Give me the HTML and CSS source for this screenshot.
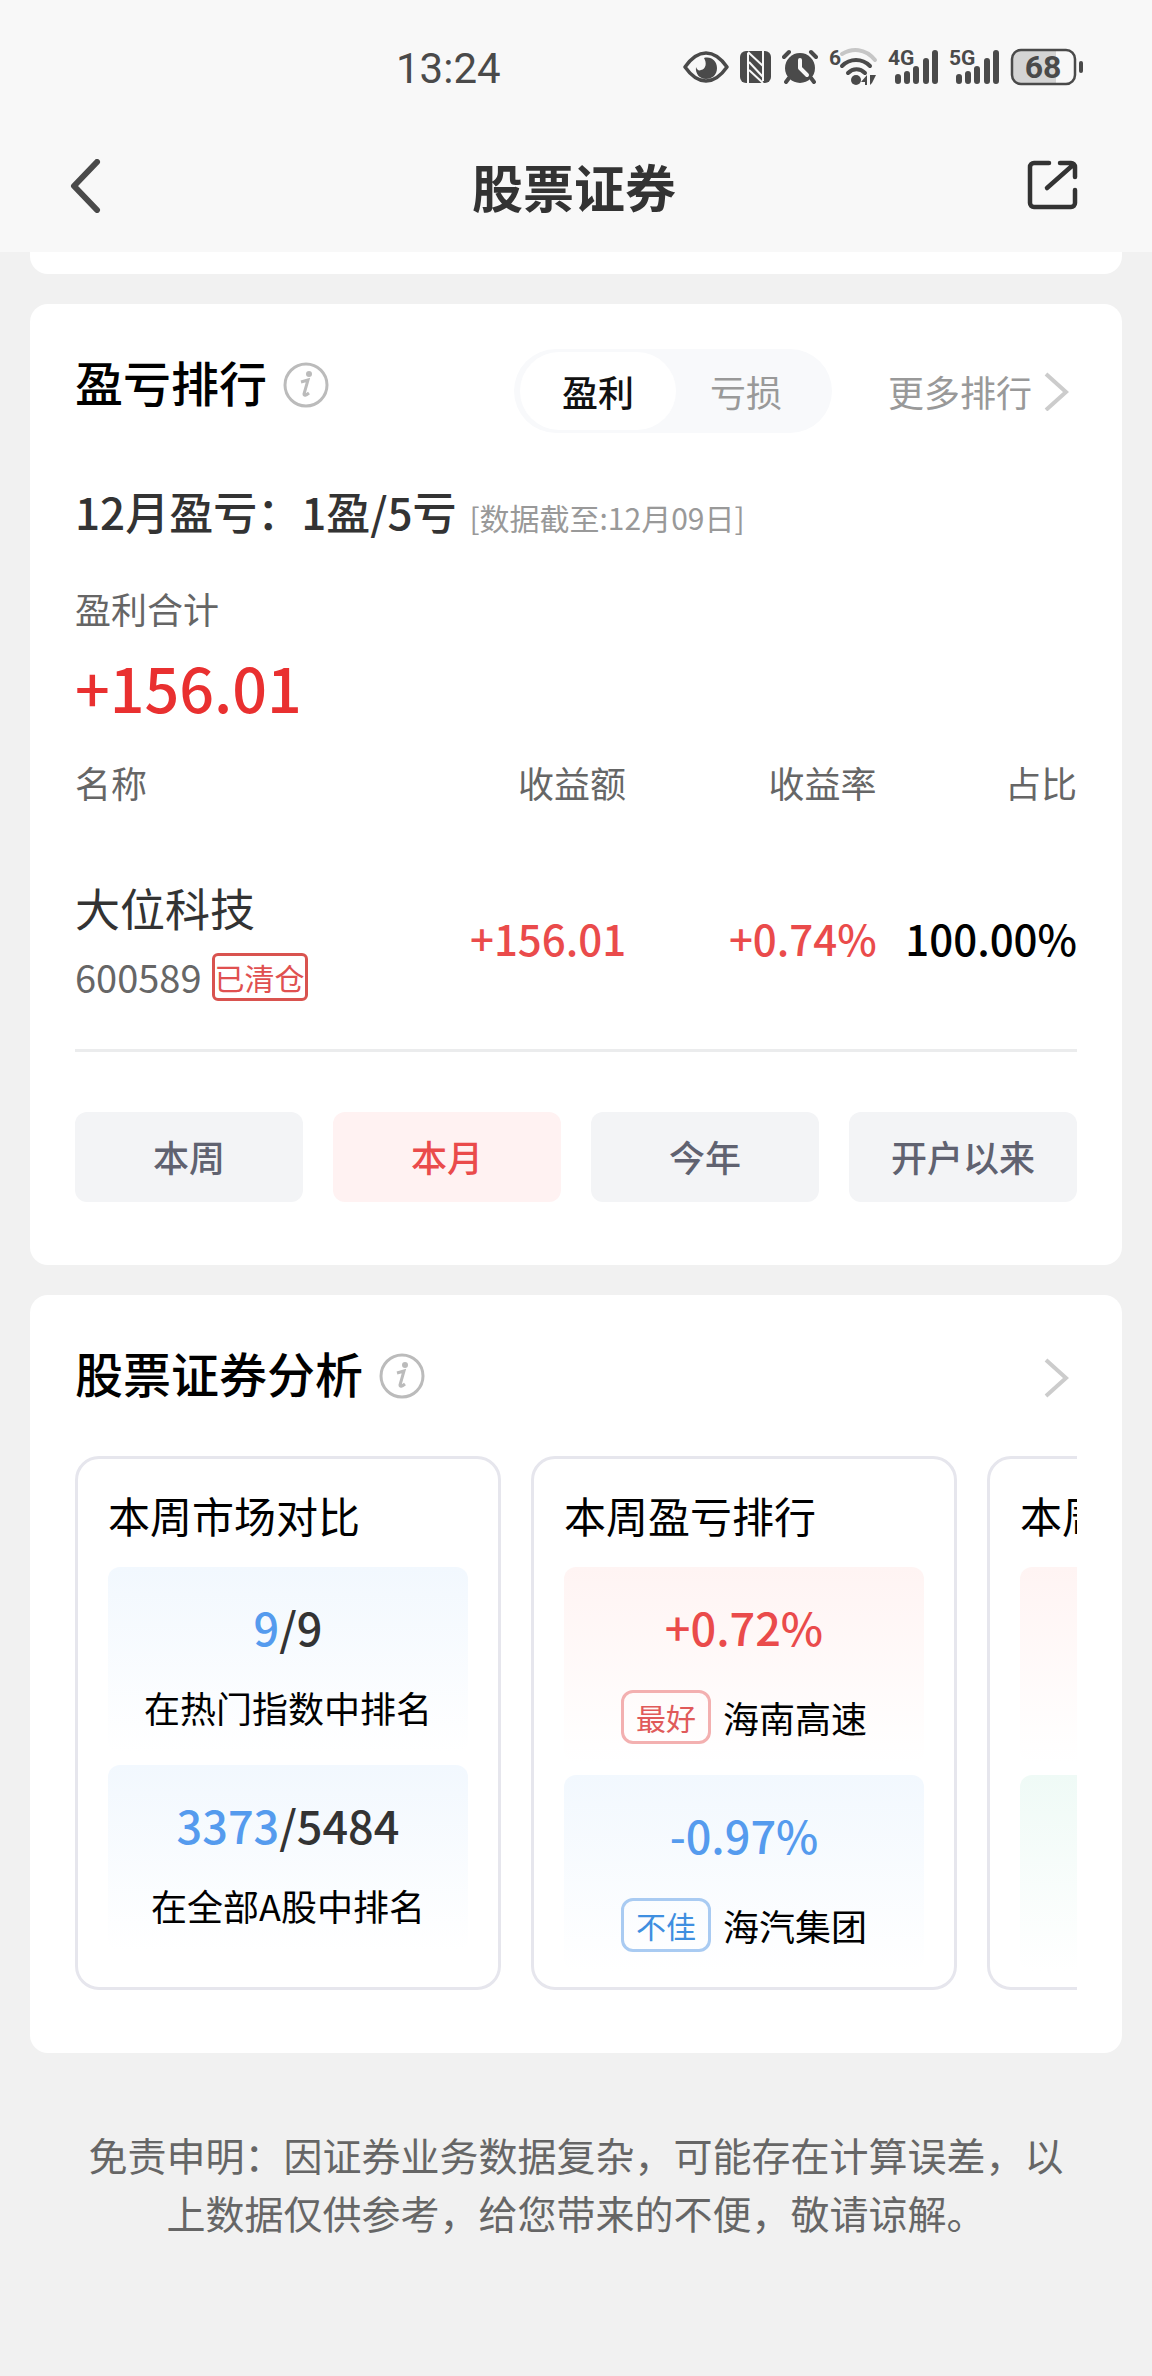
FILE: index.html
```html
<!DOCTYPE html>
<html lang="zh-CN">
<head>
<meta charset="utf-8">
<meta name="viewport" content="width=device-width, initial-scale=1">
<title>股票证券</title>
<link rel="stylesheet" href="styles.css">
</head>
<body>
<header class="top">
  <div class="status">
    <span class="status-time">13:24</span>
    <div class="status-icons">
      <svg width="46" height="36" viewBox="0 0 46 36" aria-hidden="true">
        <path d="M2 18C9 8 16 4 23 4s14 4 21 14C37 28 30 32 23 32S9 28 2 18Z" fill="none" stroke="#4a4a4a" stroke-width="3.5" stroke-linejoin="round"/>
        <path d="M21 9c7-2 13 3 13 10s-5 11-11 11-11-5-10-12c1 3 3 4 5 3 5-1 6-7 3-12Z" fill="#4a4a4a"/>
      </svg>
      <svg width="31" height="36" viewBox="0 0 31 36" aria-hidden="true">
        <rect x="0" y="2" width="31" height="32" rx="6" fill="#4a4a4a"/>
        <path d="M8 34V4M8 3l15 14M23 32V2M9 13l14 15M9 21l14 13" fill="none" stroke="#f8f8f8" stroke-width="2"/>
      </svg>
      <svg width="36" height="36" viewBox="0 0 36 36" aria-hidden="true">
        <circle cx="18" cy="19" r="15" fill="#4a4a4a"/>
        <path d="M2 8l5-5M34 8l-5-5M7 29l-3 4M29 29l3 4" stroke="#4a4a4a" stroke-width="4" stroke-linecap="round"/>
        <path d="M18 11v8l7 7" fill="none" stroke="#f8f8f8" stroke-width="4" stroke-linecap="round" stroke-linejoin="round"/>
      </svg>
      <svg class="net" width="48" height="38" viewBox="0 0 48 38" aria-hidden="true">
        <text x="0" y="17" class="net-label">6</text>
        <g fill="none" stroke="#4a4a4a" stroke-width="4" stroke-linecap="round">
          <path d="M13 6c10-6 23-6 33 6" stroke="#c6c6c6"/>
          <path d="M13 18c8-8 20-8 28 0M19 25c5-5 12-5 17 0"/>
        </g>
        <circle cx="27" cy="32" r="5" fill="#4a4a4a"/>
        <path d="M38 27v10h-2v-3h-4zM41 37V27h6l-4 8z" fill="#4a4a4a"/>
      </svg>
      <svg class="net" width="50" height="38" viewBox="0 0 50 38" aria-hidden="true">
        <text x="0" y="17" class="net-label">4G</text>
        <path d="M10 29v4M19 26v7M28 21v12M38 13v20M47 5v28" stroke="#4a4a4a" stroke-width="6" stroke-linecap="round"/>
      </svg>
      <svg class="net" width="50" height="38" viewBox="0 0 50 38" aria-hidden="true">
        <text x="0" y="17" class="net-label">5G</text>
        <path d="M10 29v4M19 26v7M28 21v12M38 13v20M47 5v28" stroke="#4a4a4a" stroke-width="6" stroke-linecap="round"/>
      </svg>
      <svg width="74" height="38" viewBox="0 0 74 38" aria-hidden="true">
        <path d="M11 2h35v34H11a9 9 0 0 1-9-9V11a9 9 0 0 1 9-9Z" fill="#d4d4d4"/>
        <rect x="2" y="2" width="63" height="34" rx="9" fill="none" stroke="#4a4a4a" stroke-width="2.5"/>
        <path d="M71 15v8" stroke="#4a4a4a" stroke-width="4" stroke-linecap="round"/>
        <text x="33" y="30" text-anchor="middle" class="battery-label">68</text>
      </svg>
    </div>
  </div>
  <nav class="nav">
    <button class="icon-button" aria-label="返回">
      <svg width="54" height="54" viewBox="0 0 54 54"><path d="M29 3L6 27l23 24" fill="none" stroke="#4a4a4a" stroke-width="6" stroke-linecap="round" stroke-linejoin="round"/></svg>
    </button>
    <h1 class="nav-title">股票证券</h1>
    <button class="icon-button" aria-label="分享">
      <svg width="54" height="54" viewBox="0 0 54 54"><path d="M23 4H8a4 4 0 0 0-4 4v36a4 4 0 0 0 4 4h37a4 4 0 0 0 4-4V31M34 4h11a4 4 0 0 1 4 4v10M47 6L21 29" fill="none" stroke="#333" stroke-width="4.5" stroke-linecap="round" stroke-linejoin="round"/></svg>
    </button>
  </nav>
</header>

<main class="page">
  <div class="card-tail"></div>

  <section class="card">
    <div class="card-head card-head-tabs">
      <div class="heading">
        <h2 class="card-title">盈亏排行</h2>
        <button class="icon-button info" aria-label="说明">
          <svg width="46" height="46" viewBox="0 0 46 46"><circle cx="23" cy="23" r="21" fill="none" stroke="#bbb" stroke-width="3"/><circle cx="26" cy="12" r="3" fill="#bbb"/><path d="M18 20l7-2-4 14q0 3 5-1" fill="none" stroke="#bbb" stroke-width="3"/></svg>
        </button>
      </div>
      <div class="segment">
        <button class="segment-item segment-item-on">盈利</button>
        <button class="segment-item">亏损</button>
      </div>
      <a class="more" href="#rank">更多排行
        <svg width="28" height="40" viewBox="0 0 28 40" aria-hidden="true"><path d="M4 3l20 18L4 39" fill="none" stroke="#ccc" stroke-width="4"/></svg>
      </a>
    </div>

    <p class="summary">12月盈亏：1盈/5亏 <small class="summary-note">[数据截至:12月09日]</small></p>
    <p class="total-label">盈利合计</p>
    <p class="total">+156.01</p>

    <table class="rank" id="rank">
      <colgroup><col class="col-name"><col class="col-rate"><col class="col-rate"><col class="col-share"></colgroup>
      <thead>
        <tr><th>名称</th><th>收益额</th><th>收益率</th><th>占比</th></tr>
      </thead>
      <tbody>
        <tr>
          <td>
            <div class="stock-name">大位科技</div>
            <div class="stock-meta">600589 <span class="closed">已清仓</span></div>
          </td>
          <td class="up">+156.01</td>
          <td class="up">+0.74%</td>
          <td>100.00%</td>
        </tr>
      </tbody>
    </table>

    <div class="periods">
      <button class="period">本周</button>
      <button class="period period-on">本月</button>
      <button class="period">今年</button>
      <button class="period">开户以来</button>
    </div>
  </section>

  <section class="card" id="analysis">
    <div class="card-head">
      <div class="heading">
        <h2 class="card-title">股票证券分析</h2>
        <button class="icon-button info" aria-label="说明">
          <svg width="46" height="46" viewBox="0 0 46 46"><circle cx="23" cy="23" r="21" fill="none" stroke="#bbb" stroke-width="3"/><circle cx="26" cy="12" r="3" fill="#bbb"/><path d="M18 20l7-2-4 14q0 3 5-1" fill="none" stroke="#bbb" stroke-width="3"/></svg>
        </button>
      </div>
      <a class="more" href="#analysis" aria-label="更多分析">
        <svg width="28" height="40" viewBox="0 0 28 40" aria-hidden="true"><path d="M4 2l20 18L4 38" fill="none" stroke="#ccc" stroke-width="4"/></svg>
      </a>
    </div>

    <div class="panels">
      <article class="panel">
        <h3 class="panel-title">本周市场对比</h3>
        <div class="tile tile-blue">
          <p class="figure"><span class="down">9</span>/9</p>
          <p class="caption">在热门指数中排名</p>
        </div>
        <div class="tile tile-blue">
          <p class="figure"><span class="down">3373</span>/5484</p>
          <p class="caption">在全部A股中排名</p>
        </div>
      </article>
      <article class="panel">
        <h3 class="panel-title">本周盈亏排行</h3>
        <div class="tile tile-red">
          <p class="figure up">+0.72%</p>
          <p class="caption caption-tagged"><span class="tag tag-best">最好</span>海南高速</p>
        </div>
        <div class="tile tile-blue">
          <p class="figure down">-0.97%</p>
          <p class="caption caption-tagged"><span class="tag tag-worst">不佳</span>海汽集团</p>
        </div>
      </article>
      <article class="panel">
        <h3 class="panel-title">本周</h3>
        <div class="tile tile-red tile-tall"></div>
        <div class="tile tile-green tile-tall"></div>
      </article>
    </div>
  </section>

  <p class="disclaimer">免责申明：因证券业务数据复杂，可能存在计算误差，以上数据仅供参考，给您带来的不便，敬请谅解。</p>
</main>
</body>
</html>
```
FILE: styles.css
```css
* { box-sizing: border-box; }

body {
  margin: 0;
  background: #f1f1f1;
  color: #000;
  font-family: "Noto Sans CJK SC", sans-serif;
  font-size: 36px;
  line-height: 54px;
}

h1, h2, h3, p { margin: 0; }

button {
  border: 0;
  padding: 0;
  background: none;
  color: inherit;
  font: inherit;
}

svg { display: block; }

.icon-button { display: flex; flex: none; }

/* status bar and navigation */
.top { background: #f8f8f8; padding-bottom: 14px; }

.status {
  display: flex;
  align-items: center;
  justify-content: space-between;
  height: 134px;
  padding: 0 68px 0 396px;
  color: #4a4a4a;
}

.status-time { padding-top: 3px; font-family: Roboto, sans-serif; font-size: 42px; }

.status-icons { display: flex; align-items: center; gap: 11px; }

.net { overflow: visible; }
.net-label { font: bold 21px Roboto, sans-serif; fill: #4a4a4a; }
.battery-label { font: bold 32px Roboto, sans-serif; fill: #4a4a4a; }

.nav {
  display: flex;
  align-items: center;
  justify-content: space-between;
  height: 104px;
  padding: 0 72px 0 68px;
}

.nav-title { font-size: 51px; font-weight: 700; color: #333; }

/* cards */
.page { padding: 0 30px; }

.card-tail {
  height: 22px;
  background: #fff;
  border-radius: 0 0 18px 18px;
}

.card {
  margin-top: 30px;
  padding: 45px 45px 63px;
  background: #fff;
  border-radius: 18px;
}

.card-head { display: flex; align-items: center; height: 76px; }
.card-head-tabs { height: 84px; }

.heading { display: flex; align-items: center; align-self: flex-start; margin-right: auto; }
.card-title { font-size: 48px; font-weight: 500; line-height: 64px; }
.info { margin-left: 16px; padding-top: 8px; }

.segment {
  display: flex;
  padding: 3px 16px 3px 6px;
  border-radius: 42px;
  background: #f8f9fb;
}

.segment-item {
  width: 140px;
  height: 78px;
  border-radius: 39px;
  color: #999;
}

.segment-item-on { width: 156px; background: #fff; color: #111; font-weight: 500; }

.more {
  display: flex;
  align-items: center;
  gap: 10px;
  margin-left: 56px;
  padding-right: 7px;
  color: #999;
  text-decoration: none;
}

.summary { margin-top: 45px; font-size: 44px; font-weight: 500; line-height: 66px; color: #333; }
.summary-note { margin-left: 3px; font-size: 30px; font-weight: 400; color: #999; }
.total-label { margin-top: 31px; color: #666; }
.total { margin-top: 7px; font-size: 61px; font-weight: 500; line-height: 90px; color: #e93030; }

/* ranking table */
.rank {
  width: 100%;
  margin-top: 23px;
  border-collapse: collapse;
  table-layout: fixed;
  border-bottom: 3px solid #ebeced;
}

.col-name { width: 30%; }
.col-rate { width: 25%; }
.col-share { width: 20%; }

.rank th { padding: 0; font-weight: 400; color: #666; text-align: right; }
.rank td { padding: 66px 0 48px; font-size: 42px; font-weight: 500; text-align: right; white-space: nowrap; }
.rank th:first-child, .rank td:first-child { text-align: left; }

.stock-name { font-size: 45px; font-weight: 400; line-height: 66px; color: #333; }

.stock-meta {
  display: flex;
  align-items: center;
  gap: 10px;
  margin-top: 12px;
  font-size: 38px;
  font-weight: 400;
  line-height: 48px;
  color: #666;
}

.closed {
  border: 3px solid #d9534f;
  border-radius: 6px;
  font-size: 30px;
  line-height: 42px;
  color: #e05050;
}

.up { color: #ea4b4b; }
.down { color: #559bee; }

.periods { display: grid; grid-template-columns: repeat(4, 1fr); gap: 30px; margin-top: 60px; }

.period {
  height: 90px;
  padding-bottom: 2px;
  border-radius: 12px;
  background: #f3f4f6;
  color: #606270;
  font-weight: 500;
}

.period-on { background: #fff2f2; color: #ea4b4b; }

/* analysis panels */
.panels { display: flex; gap: 30px; margin-top: 40px; overflow: hidden; }

.panel {
  flex: none;
  width: 426px;
  padding: 24px 30px 16px;
  border: 3px solid #e6e6ed;
  border-radius: 24px;
}

.panel-title { margin-bottom: 21px; font-size: 42px; font-weight: 400; line-height: 63px; }

.tile {
  padding: 27px 0 16px;
  border-radius: 12px;
  text-align: center;
}

.tile + .tile { margin-top: 12px; }

.tile-tall { height: 196px; }
.tile-blue { background: linear-gradient(#f2f8fe, #fff); }
.tile-red { background: linear-gradient(#fff4f3, #fff); }
.tile-green { background: linear-gradient(#effaf6, #fff); }

.figure { font-size: 45px; font-weight: 500; line-height: 66px; color: #333; }
.figure.up { color: #ea4b4b; }
.figure.down { color: #559bee; }

.caption {
  display: flex;
  align-items: center;
  justify-content: center;
  gap: 12px;
  height: 60px;
  margin-top: 17px;
}

.caption-tagged { margin-top: 27px; }

.tag {
  padding: 0 12px;
  border: 3px solid;
  border-radius: 12px;
  font-size: 30px;
  line-height: 48px;
}

.tag-best { border-color: #f3b0b0; color: #e05a5a; }
.tag-worst { border-color: #a9cbf2; color: #3f8fe0; }

.disclaimer {
  padding: 72px 45px 60px;
  font-size: 39px;
  line-height: 58px;
  color: #666;
  text-align: center;
}
```
